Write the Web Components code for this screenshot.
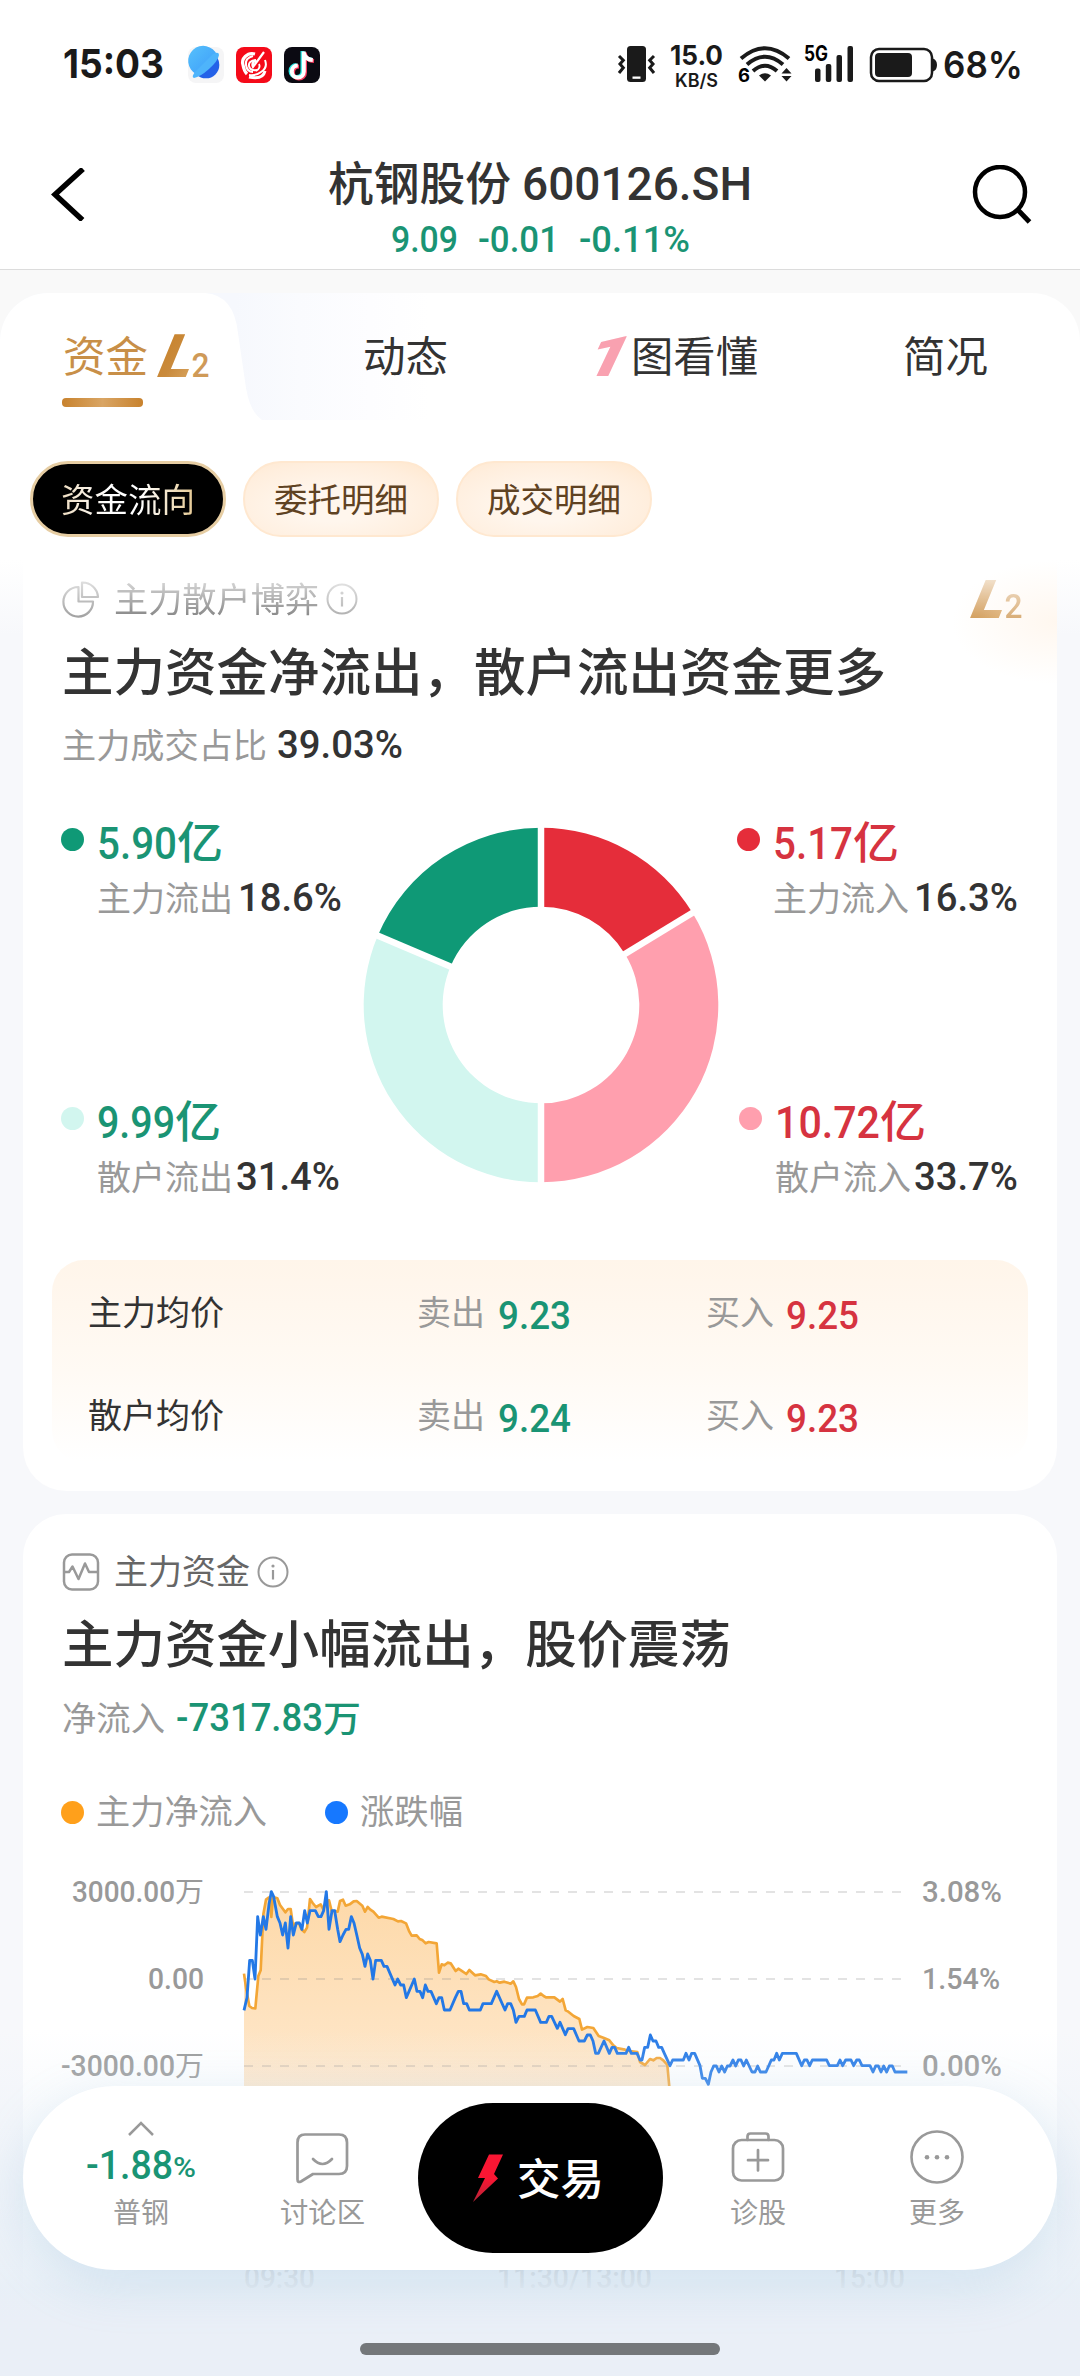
<!DOCTYPE html>
<html lang="zh-CN">
<head>
<meta charset="utf-8">
<title>杭钢股份 600126.SH</title>
<style>
html,body{margin:0;padding:0}
body{width:1080px;height:2376px;overflow:hidden;background:#f7f8fb;font-family:"Noto Sans CJK SC",sans-serif}
</style>
</head>
<body>
<stock-page></stock-page>
<script>
const define = (tag, html, setup) => customElements.define(tag, class extends HTMLElement {
  connectedCallback() {
    if (this.shadowRoot) return;
    const root = this.attachShadow({ mode: 'open' });
    const t = document.createElement('template');
    t.innerHTML = typeof html === 'function' ? html(this) : html;
    root.append(t.content.cloneNode(true));
    if (setup) setup(this, root);
  }
});

/* One line of text set to an exact size and width. kind: c = Chinese, n = numeric, i = Inter */
define('fit-text', el => {
  const k = el.getAttribute('kind') || 'c';
  const fam = { c: '"Noto Sans CJK SC",sans-serif', n: 'Roboto,"Noto Sans CJK SC",sans-serif', i: 'Inter,sans-serif' }[k];
  return `<style>
  :host{display:block;flex:none;white-space:nowrap;font-family:${fam};font-size:${el.getAttribute('size') || 34}px;line-height:1;height:1em}
  span{display:inline-block;transform-origin:0 50%}
  </style><span><slot></slot></span>`;
}, (el, root) => {
  const s = root.querySelector('span'), k = el.getAttribute('kind') || 'c';
  const w = +el.getAttribute('w'), dy = +(el.getAttribute('dy') || 0);
  const nat = s.getBoundingClientRect().width;
  const y = ({ c: -0.056, n: 0.014, i: 0 })[k];
  s.style.transform = `translateY(calc(${y}em + ${dy}px)) scaleX(${w && nat ? w / nat : 1})`;
  if (w) el.style.width = w + 'px';
});

define('l2-logo', `<style>:host{display:block;flex:none;width:54px;height:44px}svg{display:block;overflow:visible}text{font-family:Roboto,sans-serif}</style>
<svg width="54" height="44" viewBox="0 0 54 44"><defs><linearGradient id="g" x1="0" y1="0" x2="1" y2="1"><stop offset="0" stop-color="#c98228"/><stop offset=".5" stop-color="#c98a3c"/><stop offset="1" stop-color="#dba863"/></linearGradient></defs>
<text transform="translate(0 43) skewX(-13)" font-size="60" font-weight="900" font-style="italic" textLength="33" lengthAdjust="spacingAndGlyphs" fill="url(#g)">L</text>
<text x="34.500" y="43" font-size="34" font-weight="500" textLength="18" lengthAdjust="spacingAndGlyphs" fill="#cf9a58">2</text></svg>`);

define('status-bar', `<style>
:host{display:flex;height:100px;box-sizing:border-box;padding:46px 57px 0 63px;color:#1a1a1a;justify-content:space-between;align-items:flex-start}
.l,.r{display:flex;align-items:flex-start}
.l svg{margin-right:12px}
svg{display:block;flex:none;overflow:visible}
.kb{display:flex;flex-direction:column;align-items:center;gap:1px;width:53px;margin:0 15px 0 15px}
fit-text{font-weight:700}
text{font-family:Inter,sans-serif;font-weight:700}
</style>
<div class="l"><fit-text kind="i" size="40" w="101" dy="-2.500" style="margin-right:24px">15:03</fit-text>
<svg width="36" height="36" viewBox="0 0 36 36" style="margin-top:1px"><defs><linearGradient id="p" x1="0" y1="0" x2="1" y2="1"><stop offset="0" stop-color="#56c1fb"/><stop offset="1" stop-color="#3c9bfa"/></linearGradient></defs><rect width="36" height="36" rx="8" fill="#f5f5f6"/><circle cx="18" cy="18" r="13.300" fill="#2462e8"/><path d="M29 8A15 15 0 1 0 8 27Q22 23 29 8Z" fill="url(#p)"/><path d="M25 7Q31 4 31 8Q30 14 21 22T6 31Q3 30 7 25Z" fill="#4eb4fb"/></svg>
<svg width="36" height="36" viewBox="0 0 36 36" style="margin-top:1px"><rect width="36" height="36" rx="8" fill="#f50a19"/><g fill="none" stroke="#fff"><path d="M19 7C11 5 5 12 7 18Q8 24 11 27" stroke-width="3.200"/><path d="M17 9Q9 11 10 18T17 25" stroke-width="2"/><path d="M29 13Q32 21 25 25Q20 29 13 28" stroke-width="2"/><path d="M13 30Q27 33 29 24" stroke-width="3"/><path d="M20 13Q12 14 13 19T21 23" stroke-width="2"/><path d="M28 5L17 20Q15 16 20 13" stroke-width="2.200"/><path d="M23 17Q25 21 20 24" stroke-width="1.800"/></g></svg>
<svg width="36" height="36" viewBox="0 0 36 36" style="margin-top:1px"><rect width="36" height="36" rx="8" fill="#0b0a12"/><g fill="none" stroke-width="4"><path d="M19.500 4V24a6 6 0 1 1-6-6M19.500 6q2 6 9 6.500" stroke="#27e5e2" transform="translate(-1 0)"/><path d="M19.500 4V24a6 6 0 1 1-6-6M19.500 6q2 6 9 6.500" stroke="#fb3a5d" transform="translate(1.500 1.500)"/><path d="M19.500 4V24a6 6 0 1 1-6-6M19.500 6q2 6 9 6.500" stroke="#fff" transform="translate(.3 .5)"/></g></svg>
</div>
<div class="r">
<svg width="37" height="36" viewBox="0 0 37 36"><rect x="9" width="19" height="36" rx="3.500" fill="#1a1a1a"/><rect x="14.500" y="30.500" width="8" height="2.300" fill="#fff"/><path d="M1 10l4.300 4.300-3.300 3.700 3.300 3.700L1 27M36 10l-4.300 4.300 3.300 3.700-3.300 3.700L36 27" fill="none" stroke="#1a1a1a" stroke-width="3"/></svg>
<div class="kb"><fit-text kind="i" size="27" w="53" dy="-4">15.0</fit-text><fit-text kind="i" size="18" w="43" dy="-2.500" style="font-weight:600">KB/S</fit-text></div>
<svg width="53" height="36" viewBox="0 0 53 36"><g fill="none" stroke="#1a1a1a" stroke-width="4"><path d="M3 12.500Q27-8 51 12.500M9 18.500Q27 3 45 18.500M15 25Q27 14.500 39 25"/></g><path d="M21 29.500Q27 25 33 29.500L27 35.500Z" fill="#1a1a1a"/><path d="M48.500 22l5 5.500h-10zM48.500 35.500l5-5.500h-10z" fill="#1a1a1a"/><text x="0" y="35.500" font-size="19" textLength="12" lengthAdjust="spacingAndGlyphs">6</text></svg>
<svg width="50" height="36" viewBox="0 0 50 36" style="margin:0 16px 0 13px"><text x="0" y="15" font-size="21" textLength="24" lengthAdjust="spacingAndGlyphs">5G</text><g fill="#1a1a1a"><rect x="11" y="22.500" width="5.500" height="13.500" rx="2"/><rect x="21.800" y="18" width="5.500" height="18" rx="2"/><rect x="32.500" y="9" width="5.500" height="27" rx="2"/><rect x="43.500" width="5.500" height="36" rx="2"/></g></svg>
<svg width="67" height="36" viewBox="0 0 67 36"><rect x="1" y="3" width="61" height="32" rx="8" fill="none" stroke="#1a1a1a" stroke-width="2.500"/><rect x="5" y="7" width="37" height="24" rx="4" fill="#1a1a1a"/><path d="M63 12.500q4 1.500 4 6.500t-4 6.500z" fill="#1a1a1a"/></svg>
<fit-text kind="i" size="37" w="80" dy="-.5" style="margin-left:6px;font-weight:600">68%</fit-text>
</div>`);

define('stock-header', `<style>
:host{display:flex;height:170px;box-sizing:border-box;border-bottom:1px solid #dcdcdc;padding:0 48px 0 51px;justify-content:space-between}
.m{display:flex;flex-direction:column;align-items:center;padding-top:60px;margin-left:23px}
.row{display:flex;align-items:center;height:46px;color:#333;font-weight:500}
.sub{display:flex;height:37px;margin-top:14px;gap:20px;align-items:center;color:#1a9474;font-weight:500}
svg{display:block;margin-top:68px}
</style>
<svg width="35" height="53" viewBox="0 0 35 53"><path d="M32 1L4 26.500 31.500 52" fill="none" stroke="#000" stroke-width="5.500"/></svg>
<div class="m"><div class="row"><fit-text size="46" w="183" style="margin-right:11px">杭钢股份</fit-text><fit-text kind="n" size="46" w="230">600126.SH</fit-text></div>
<div class="sub"><fit-text kind="n" size="37" w="67">9.09</fit-text><fit-text kind="n" size="37" w="81">-0.01</fit-text><fit-text kind="n" size="37" w="111">-0.11%</fit-text></div></div>
<svg width="61" height="62" viewBox="0 0 61 62" style="margin-top:65px"><circle cx="29" cy="27" r="25" fill="none" stroke="#000" stroke-width="4.500"/><path d="M46.500 44.500L58.500 57" stroke="#000" stroke-width="5"/></svg>`);

define('tab-bar', `<style>
:host{display:flex;height:127px;background:linear-gradient(90deg,#f6f8fd 235px,#fafbfe 300px,#fdfdff 370px,#fff 430px);border-radius:48px 48px 0 0;margin-top:23px;position:relative;overflow:hidden}
.shape{position:absolute;left:0;top:0}
.tab{display:flex;align-items:center;height:86px;padding-top:20px;color:#333;position:relative}
.t{display:flex;align-items:center;height:86px}
.line{width:81px;height:9px;border-radius:4px;background:linear-gradient(90deg,#c8822d,#d9a564 50%,#c8822d);margin:-1px 0 0 -1px}
.a{width:300px;flex-direction:column;align-items:flex-start;height:auto;padding:20px 0 0 63px;box-sizing:border-box;color:#c88f48}
svg.i{display:block;overflow:visible;margin-right:10px}
</style>
<svg class="shape" width="290" height="127"><path d="M0 0H205Q234 2 238 40L246 95Q250 119 262 127H0Z" fill="#fff"/></svg>
<div class="tab a"><div class="t" style="gap:9px"><fit-text size="42" w="85">资金</fit-text><l2-logo></l2-logo></div><div class="line"></div></div>
<div class="tab" style="margin-left:63px"><fit-text size="42" w="85">动态</fit-text></div>
<div class="tab" style="margin-left:144px"><svg class="i" width="31" height="40" viewBox="0 0 31 40"><text transform="translate(-9 39.500) skewX(-14)" font-family="Roboto" font-weight="900" font-style="italic" font-size="56" textLength="41" lengthAdjust="spacingAndGlyphs" fill="#f9a1b0">1</text></svg><fit-text size="42" w="127" style="margin-left:-2px">图看懂</fit-text></div>
<div class="tab" style="margin-left:145px"><fit-text size="42" w="85">简况</fit-text></div>`);

define('chip-button', `<style>
:host{display:flex;width:196px;height:76px;box-sizing:border-box;border-radius:38px;align-items:center;justify-content:center;font-size:33.500px;line-height:70px;color:#5f4222;border:2px solid #ffe8d0;background:radial-gradient(ellipse at 45% 60%,#fff6ed 0 25%,#ffeedd 70%,#ffe6cb 100%)}
:host([active]){background:#000;border:3px solid #e6cda3}
span{display:block;transform:translateY(-1.500px)}
:host([active]) span{background:linear-gradient(90deg,#eddcc0,#fff 35%,#fff 60%,#e5c993);-webkit-background-clip:text;background-clip:text;color:transparent}
</style><span><slot></slot></span>`);

define('chip-row', `<style>:host{display:flex;gap:17px;padding:41px 0 0 30px;height:99px;background:#fff}</style><slot></slot>`);

define('info-dot', `<style>:host{display:block;flex:none}svg{display:block}</style><svg width="32" height="32" viewBox="0 0 32 32"><circle cx="16" cy="16" r="14.500" fill="none" stroke="#999" stroke-width="2"/><circle cx="16" cy="10" r="1.600" fill="#999"/><path d="M16 14v9.500" stroke="#999" stroke-width="2.200"/></svg>`);

define('app-card', `<style>
:host{display:block;width:1034px;box-sizing:border-box;margin:0 auto;background:#fff;border-radius:43px;overflow:hidden}
:host([first]){border-radius:0 0 43px 43px;background:radial-gradient(ellipse 105px 62px at 100% 62px,#fff7ef,#fff) #fff}
</style><slot></slot>`);

define('card-head', `<style>
:host{display:flex;align-items:center;height:38px;padding-left:39px;color:#666}
.x{margin-left:auto;margin-right:33px}
:host([fade]){-webkit-mask-image:linear-gradient(rgba(0,0,0,.25),rgba(0,0,0,.8));mask-image:linear-gradient(rgba(0,0,0,.25),rgba(0,0,0,.8))}
</style><slot></slot><div class="x"><slot name="end"></slot></div>`);

define('legend-item', el => {
  const g = n => el.getAttribute(n);
  return `<style>:host{display:block;height:96px;color:${g('color')}}
  .a{display:flex;height:46px;align-items:center;font-weight:500}
  .d{width:23px;height:23px;border-radius:50%;background:${g('dot')};margin:0 13px 5px 0;flex:none}
  .b{display:flex;height:34px;margin:16px 0 0 36px;align-items:center;color:#999}
  .b fit-text+fit-text{font-weight:500;color:#333}
  </style><div class="a"><div class="d"></div><fit-text kind="n" size="45" w="${g('vw')}">${g('value')}</fit-text><fit-text size="44" w="46">亿</fit-text></div>
  <div class="b"><fit-text w="136" dy="1">${g('label')}</fit-text><fit-text kind="n" size="39.500" w="104" dy="-1" style="margin-left:${g('gap') || 5}px">${g('pct')}</fit-text></div>`;
});

define('donut-chart', `<style>:host{display:block;width:356px;height:356px;flex:none}svg{display:block}</style><svg width="356" height="356" viewBox="-178 -178 356 356"></svg>`, (el, root) => {
  const svg = root.querySelector('svg'), R = 177.300, r = 98.300;
  const parts = [[16.3, '#e52d3a'], [33.7, '#ff9fae'], [31.4, '#d2f6ef'], [18.6, '#0f9976']];
  let acc = 0, out = '', lines = '';
  for (const [v, c] of parts) {
    const a = acc / 100 * 2 * Math.PI, b = (acc + v) / 100 * 2 * Math.PI;
    const p = (t, k) => `${(Math.sin(t) * k).toFixed(2)} ${(-Math.cos(t) * k).toFixed(2)}`;
    out += `<path fill="${c}" d="M${p(a, R)}A${R} ${R} 0 0 1 ${p(b, R)}L${p(b, r)}A${r} ${r} 0 0 0 ${p(a, r)}Z"/>`;
    lines += `<path stroke="#fff" stroke-width="6.500" d="M${p(a, r - 3)}L${p(a, R + 3)}"/>`;
    acc += v;
  }
  svg.innerHTML = out + lines;
});

define('price-table', `<style>
:host{display:block;margin:0 29px;height:202px;border-radius:32px;background:linear-gradient(#fff5ea,#fffaf4 55%,#fff)}
.r{display:flex;align-items:center;height:103px;padding-left:36px;color:#999}
.k{color:#333}.g{color:#1a9474;font-weight:500}.d{color:#d63340;font-weight:500}
</style>
<div class="r"><fit-text class="k" w="136" dy="1">主力均价</fit-text><fit-text w="68" style="margin-left:193px" dy="1">卖出</fit-text><fit-text class="g" kind="n" size="39.500" w="73" dy="3" style="margin-left:13px">9.23</fit-text><fit-text w="68" style="margin-left:135px" dy="1">买入</fit-text><fit-text class="d" kind="n" size="39.500" w="73" dy="3" style="margin-left:12px">9.25</fit-text></div>
<div class="r"><fit-text class="k" w="136" dy="1">散户均价</fit-text><fit-text w="68" style="margin-left:193px" dy="1">卖出</fit-text><fit-text class="g" kind="n" size="39.500" w="73" dy="3" style="margin-left:13px">9.24</fit-text><fit-text w="68" style="margin-left:135px" dy="1">买入</fit-text><fit-text class="d" kind="n" size="39.500" w="73" dy="3" style="margin-left:12px">9.23</fit-text></div>`);

define('flow-card', `<style>
:host{display:block}
.title{padding:0 0 0 39px;height:52px;margin-top:29px;color:#333;font-weight:500}
.sub{display:flex;align-items:center;height:34px;margin-top:30px;padding-left:39px;color:#999}
.z{display:flex;height:375px;margin-top:56px;padding:0 0 0 38px}
.c{display:flex;flex-direction:column;justify-content:space-between}
svg{display:block}
</style>
<app-card first>
<div style="height:20px"></div>
<card-head fade><svg width="38" height="38" viewBox="0 0 38 38" style="margin-right:14px"><g fill="none" stroke="#888" stroke-width="2.200" stroke-linejoin="round"><path d="M16.500 7A14.800 14.800 0 1 0 31 21.500H16.500Z"/><path d="M20 2.500V17H36A15.500 15.500 0 0 0 20 2.500Z"/></g></svg><fit-text w="205" dy="1">主力散户博弈</fit-text><info-dot style="margin-left:7px"></info-dot><l2-logo slot="end" style="margin-top:-5px"></l2-logo></card-head>
<div class="title"><fit-text size="51" w="824">主力资金净流出，散户流出资金更多</fit-text></div>
<div class="sub"><fit-text w="205">主力成交占比</fit-text><fit-text kind="n" size="39.500" w="126" dy="-2" style="margin-left:10px;color:#333;font-weight:500">39.03%</fit-text></div>
<div class="z"><div class="c" style="width:302px"><legend-item color="#1a9474" dot="#0f9976" value="5.90" vw="80" label="主力流出" pct="18.6%"></legend-item><legend-item color="#1a9474" dot="#d2f6ef" value="9.99" vw="78" label="散户流出" pct="31.4%" gap="3"></legend-item></div>
<donut-chart style="margin-top:8px"></donut-chart>
<div class="c" style="margin-left:18px"><legend-item color="#d63340" dot="#e52d3a" value="5.17" vw="80" label="主力流入" pct="16.3%"></legend-item><legend-item color="#d63340" dot="#ff9fae" value="10.72" vw="105" label="散户流入" pct="33.7%" gap="3" style="margin-left:2px"></legend-item></div></div>
<div style="height:66px"></div>
<price-table></price-table>
<div style="height:29px"></div>
</app-card>`);

define('trend-chart', `<style>
:host{display:flex;color:#999;height:430px}
.l{width:181px;display:flex;flex-direction:column;align-items:flex-end;gap:57px;box-sizing:border-box;margin-right:40px}
.l .y,.r .y{display:flex;align-items:center;height:30px}
.r{display:flex;flex-direction:column;align-items:flex-start;gap:57px}
.m{width:678px;height:430px}
fit-text{font-weight:500}
svg{display:block;overflow:visible}
.x{display:flex;justify-content:space-between;width:661px;margin-top:-39px}
</style>
<div class="l"><div class="y"><fit-text kind="n" size="30" w="103">3000.00</fit-text><fit-text size="28" w="29" style="font-weight:400">万</fit-text></div><div class="y"><fit-text kind="n" size="30" w="56">0.00</fit-text></div><div class="y"><fit-text kind="n" size="30" w="114">-3000.00</fit-text><fit-text size="28" w="29" style="font-weight:400">万</fit-text></div></div>
<div class="m"><svg width="678" height="425" viewBox="132 48 2034 1275"><defs><linearGradient id="o" x1="0" y1="100" x2="0" y2="750" gradientUnits="userSpaceOnUse"><stop offset="0" stop-color="#fdd9a9"/><stop offset="1" stop-color="#ffead1"/></linearGradient></defs>
<path class="area" fill="url(#o)"/>
<g stroke="#888" stroke-opacity=".3" stroke-width="5" stroke-dasharray="27 27"><path d="M132 93H2110M132 354H2110M132 615H2110"/></g>
<path class="or" fill="none" stroke="#f3a636" stroke-width="8" stroke-linejoin="round"/><path class="bl" fill="none" stroke="#2378e6" stroke-width="8.500" stroke-linejoin="round"/></svg>
<div class="x"><fit-text kind="n" size="30" w="71">09:30</fit-text><fit-text kind="n" size="30" w="155">11:30/13:00</fit-text><fit-text kind="n" size="30" w="71">15:00</fit-text></div></div>
<div class="r"><div class="y"><fit-text kind="n" size="30" w="80">3.08%</fit-text></div><div class="y"><fit-text kind="n" size="30" w="78">1.54%</fit-text></div><div class="y"><fit-text kind="n" size="30" w="80">0.00%</fit-text></div></div>`, (el, root) => {
  const o = '132,338 138,380 148,435 156,441 166,442 175,345 182,328 190,160 198,116 206,110 210,108 214,168 219,108 232,112 240,132 256,154 264,144 272,144 280,200 285,188 297,186 304,205 313,213 321,200 330,114 338,126 348,138 362,130 370,145 380,120 387,118 395,150 405,150 413,152 420,120 429,116 437,134 449,130 461,121 470,120 487,134 495,152 503,138 511,146 520,152 536,170 545,167 580,174 594,181 603,180 618,187 628,212 635,224 650,223 659,234 668,238 677,247 686,243 710,247 717,335 725,310 733,313 743,305 752,307 767,330 775,323 783,328 799,339 808,327 825,343 842,340 858,345 866,355 883,363 890,361 899,365 913,362 932,368 940,361 948,378 957,414 966,430 972,430 981,410 1000,409 1013,405 1022,398 1031,405 1038,409 1063,409 1080,422 1088,414 1097,448 1105,452 1121,465 1138,474 1146,506 1162,498 1180,501 1196,525 1212,531 1228,538 1240,553 1250,561 1275,566 1290,570 1312,573 1320,603 1335,612 1350,594 1360,598 1370,591 1380,591 1390,598 1402,612 1408,678 1412,760';
  const b = '132,448 141,410 149,298 157,298 165,354 173,167 181,222 190,167 198,205 207,130 214,92 221,107 232,167 240,186 248,222 256,186 264,261 272,167 280,222 289,186 298,186 306,205 314,149 322,186 330,149 346,149 355,167 363,167 371,149 379,92 387,205 396,149 404,149 413,205 420,242 429,222 438,205 446,205 454,167 462,186 471,225 479,261 487,280 495,316 503,279 511,298 519,354 527,298 544,298 552,316 561,316 569,335 585,372 593,354 602,372 611,372 619,410 643,354 651,391 660,391 668,410 676,372 684,391 693,391 709,428 717,410 725,410 733,447 750,447 766,410 775,391 783,391 791,428 800,428 808,447 841,447 849,428 874,428 890,391 915,447 923,428 932,428 940,447 948,484 957,466 973,466 981,447 1006,447 1022,484 1039,484 1047,466 1055,466 1072,502 1080,484 1096,521 1104,503 1121,503 1137,540 1153,540 1162,522 1171,522 1179,540 1187,577 1195,577 1212,540 1228,577 1236,559 1244,559 1252,577 1278,577 1286,559 1294,577 1311,577 1320,597 1326,597 1334,559 1343,559 1351,522 1359,540 1368,540 1376,559 1385,559 1393,577 1410,614 1418,597 1450,597 1458,577 1467,597 1475,577 1484,577 1500,614 1507,652 1516,652 1525,670 1533,633 1541,615 1549,615 1557,633 1565,615 1574,633 1582,615 1590,615 1599,597 1607,615 1615,597 1623,597 1631,615 1639,597 1656,633 1665,633 1673,615 1681,633 1698,633 1714,597 1722,597 1730,577 1738,597 1747,577 1789,577 1805,614 1813,597 1821,597 1829,614 1837,597 1880,597 1888,614 1912,614 1920,597 1928,614 1937,597 1953,597 1961,614 1970,597 1978,597 1986,614 2010,614 2019,633 2027,615 2035,615 2043,633 2051,615 2060,633 2068,615 2077,615 2085,633 2122,633';
  root.querySelector('.or').setAttribute('d', 'M' + o);
  root.querySelector('.bl').setAttribute('d', 'M' + b);
  root.querySelector('.area').setAttribute('d', 'M' + o + ' 132,760Z');
});

define('trend-card', `<style>
:host{display:block;margin-top:23px}
.title{padding:0 0 0 39px;height:52px;margin-top:28px;color:#333;font-weight:500}
.sub{display:flex;align-items:center;height:34px;margin-top:31px;padding-left:39px;color:#999}
.leg{display:flex;align-items:center;height:34px;margin-top:59px;padding-left:38px;color:#999}
i{width:23px;height:23px;border-radius:50%;margin-right:12px}
svg{display:block}
</style>
<app-card style="border-radius:43px 43px 0 0"><div style="height:39px"></div>
<card-head><svg width="38" height="38" viewBox="0 0 38 38" style="margin-right:14px"><g fill="none" stroke="#999" stroke-width="2.500" stroke-linejoin="round"><rect x="2" y="1.500" width="34" height="35" rx="8"/><path d="M3 19h4l3.500-5.500L16.500 26 23 10.500l4 8.500h9"/></g></svg><fit-text w="136">主力资金</fit-text><info-dot style="margin-left:7px"></info-dot></card-head>
<div class="title"><fit-text size="51" w="669">主力资金小幅流出，股价震荡</fit-text></div>
<div class="sub"><fit-text w="103">净流入</fit-text><fit-text kind="n" size="39.500" w="147" dy="-2" style="margin-left:11px;color:#1a9474;font-weight:500">-7317.83</fit-text><fit-text size="36" w="38" dy="-1" style="color:#1a9474;font-weight:500">万</fit-text></div>
<div class="leg"><i style="background:#ffa01b"></i><fit-text w="171">主力净流入</fit-text><i style="background:#1678ff;margin-left:58px"></i><fit-text w="103">涨跌幅</fit-text></div>
<div style="height:48px"></div>
<trend-chart></trend-chart>
</app-card>`);

define('nav-item', el => `<style>:host{display:flex;flex-direction:column;align-items:center;color:#999;box-sizing:border-box;height:184px;padding-top:44px;flex:none}
.ic{height:56px;display:flex;align-items:flex-start}.t{margin-top:12px}</style>
<div class="ic"><slot></slot></div><fit-text class="t" size="28" w="${el.getAttribute('w')}" dy="1">${el.getAttribute('label')}</fit-text>`);

define('bottom-nav', `<style>
:host{display:flow-root;position:absolute;left:0;top:2030px;width:1080px;height:346px;background:linear-gradient(rgba(233,240,248,0),rgba(233,240,248,.22) 56px,rgba(232,239,247,.82) 240px,rgba(232,239,247,.97) 262px,#eaeff7 290px)}
.bar{display:flex;width:1034px;height:184px;margin:56px auto 0;background:#fff;border-radius:92px;box-shadow:0 14px 50px rgba(130,180,215,.24)}
.b{display:flex;width:245px;height:150px;border-radius:75px;background:#000;color:#fff;margin-top:17px;align-items:center;flex:none;box-sizing:border-box;padding-left:55px;font-weight:500}
.q{display:flex;flex-direction:column;align-items:center;width:112px;flex:none;color:#999;margin-left:62px}
.p{display:flex;align-items:flex-end;color:#1a9474;height:38px;font-weight:500;margin-top:11px}
.home{width:360px;height:12px;border-radius:6px;background:#74777a;margin:73px auto 0}
svg{display:block}
</style>
<div class="bar">
<div class="q"><svg width="28" height="16" viewBox="0 0 28 16" style="margin-top:34px"><path d="M2 15L14 3l12 12" fill="none" stroke="#999" stroke-width="2.500"/></svg>
<div class="p"><fit-text kind="n" size="40" w="87">-1.88</fit-text><fit-text kind="n" size="28" w="23" style="margin-bottom:3px">%</fit-text></div><fit-text size="28" w="56" style="margin-top:13px" dy="1">普钢</fit-text></div>
<nav-item label="讨论区" w="85" style="width:86px;margin-left:82px"><svg width="54" height="56" viewBox="0 0 54 56"><g fill="none" stroke="#999" stroke-width="2.700" stroke-linejoin="round" stroke-linecap="round"><path d="M10 4.500H44Q52 4.500 52 12.500V36Q52 44 44 44H18L6 51.500Q2.500 53 2.500 49.500V12.500Q2.500 4.500 10 4.500Z"/><path d="M18 29q9.500 10 19 0"/></g></svg></nav-item>
<div class="b" style="margin-left:53px"><svg width="30" height="48" viewBox="0 0 30 48" style="margin-right:14px"><defs><linearGradient id="r" x1="0" y1="0" x2="0" y2="1"><stop offset=".5" stop-color="#fa1633"/><stop offset="1" stop-color="#b52437"/></linearGradient></defs><path d="M16 0.500H30L21 20l4 4.500L0 48 12 24H5Z" fill="url(#r)"/></svg><fit-text size="43" w="87">交易</fit-text></div>
<nav-item label="诊股" w="56" style="width:56px;margin-left:67px"><svg width="54" height="56" viewBox="0 0 54 56"><g fill="none" stroke="#999" stroke-width="2.700" stroke-linejoin="round" stroke-linecap="round"><rect x="2" y="10" width="50" height="40.500" rx="8.500"/><path d="M16.500 10V6.500Q16.500 3.500 19.500 3.500H34.500Q37.500 3.500 37.500 6.500V10M27 20v20.500M17 30.200H37"/></g></svg></nav-item>
<nav-item label="更多" w="56" style="width:56px;margin-left:123px"><svg width="54" height="56" viewBox="0 0 54 56"><circle cx="27" cy="27" r="25.500" fill="none" stroke="#999" stroke-width="2.600"/><g fill="#999"><circle cx="17" cy="27.300" r="2.300"/><circle cx="27" cy="27.300" r="2.300"/><circle cx="37" cy="27.300" r="2.300"/></g></svg></nav-item>
</div><div class="home"></div>`);

define('stock-page', `<style>
:host{display:block;position:relative;width:1080px;height:2376px;overflow:hidden}
.top{background:#fff}
.mid{background:#f9f9f9;display:flow-root}
.fade{background:linear-gradient(#fff,#f7f8fb 75px)}
</style>
<div class="top"><status-bar></status-bar><stock-header></stock-header></div>
<div class="mid"><tab-bar></tab-bar><chip-row><chip-button active>资金流向</chip-button><chip-button>委托明细</chip-button><chip-button>成交明细</chip-button></chip-row></div>
<div class="fade"><flow-card></flow-card><trend-card></trend-card></div>
<bottom-nav></bottom-nav>`);
</script>
</body>
</html>
